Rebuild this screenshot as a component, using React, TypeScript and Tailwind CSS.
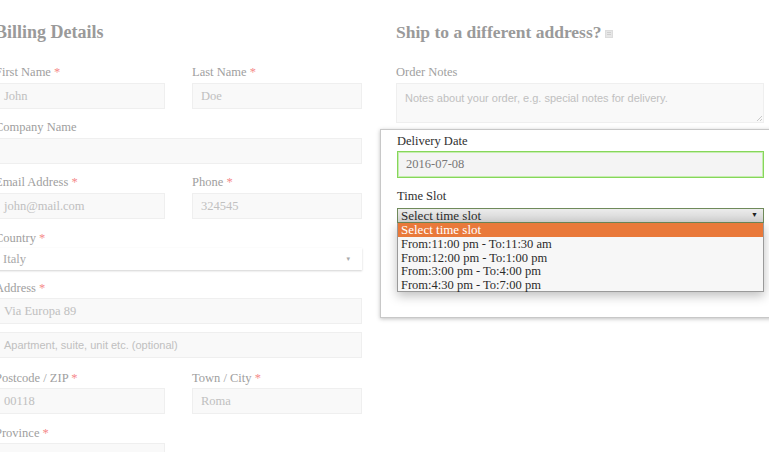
import React from 'react';

const serif = { fontFamily: '"Liberation Serif", "DejaVu Serif", serif' };

const Label: React.FC<{ children: React.ReactNode; req?: boolean; className?: string }> = ({ children, req, className = '' }) => (
  <div className={`h-4 text-[12.5px] leading-4 text-[#a0a0a0] whitespace-nowrap ${className}`}>
    {children}
    {req && <span className="text-[#f58a8a]"> *</span>}
  </div>
);

const Field: React.FC<{ value?: string; sans?: boolean; className?: string }> = ({ value, sans, className = '' }) => (
  <div
    className={`h-[26px] bg-[#f9f9f9] border border-[#efefef] px-2 flex items-center text-[12.5px] text-[#c0c0c0] whitespace-nowrap ${className}`}
    style={sans ? { fontFamily: '"Liberation Sans", Arial, sans-serif', fontSize: 11 } : undefined}
  >
    {value}
  </div>
);

const App: React.FC = () => {
  const slots = [
    'From:11:00 pm - To:11:30 am',
    'From:12:00 pm - To:1:00 pm',
    'From:3:00 pm - To:4:00 pm',
    'From:4:30 pm - To:7:00 pm',
  ];

  return (
    <div className="w-[769px] h-[452px] overflow-hidden bg-white" style={serif}>
      <div className="flex ml-[-5px] gap-[34px]">
        {/* Billing */}
        <div className="w-[367px] shrink-0 pt-5">
          <h3 className="h-6 leading-6 text-[18px] font-bold text-[#9a9a9a] mb-5">Billing Details</h3>

          <div className="flex gap-[27px]">
            <div className="w-[170px]">
              <Label req className="mb-[3px]">First Name</Label>
              <Field value="John" />
            </div>
            <div className="w-[170px]">
              <Label req className="mb-[3px]">Last Name</Label>
              <Field value="Doe" />
            </div>
          </div>

          <Label className="mt-[10px] mb-[3px]">Company Name</Label>
          <Field />

          <div className="flex gap-[27px] mt-[10px]">
            <div className="w-[170px]">
              <Label req className="mb-[3px]">Email Address</Label>
              <Field value="john@mail.com" />
            </div>
            <div className="w-[170px]">
              <Label req className="mb-[3px]">Phone</Label>
              <Field value="324545" />
            </div>
          </div>

          <Label req className="mt-[11px] mb-[2px]">Country</Label>
          <div className="h-[22px] bg-white shadow-[0_1px_2px_rgba(0,0,0,0.18)] px-2 flex items-center justify-between text-[12.5px] text-[#a8a8a8]">
            <span>Italy</span>
            <span className="text-[7px] text-[#aaa] pr-1">▾</span>
          </div>

          <Label req className="mt-[10px] mb-[2px]">Address</Label>
          <Field value="Via Europa 89" />
          <Field value="Apartment, suite, unit etc. (optional)" sans className="mt-2" />

          <div className="flex gap-[27px] mt-3">
            <div className="w-[170px]">
              <Label req className="mb-[2px]">Postcode / ZIP</Label>
              <Field value="00118" />
            </div>
            <div className="w-[170px]">
              <Label req className="mb-[2px]">Town / City</Label>
              <Field value="Roma" />
            </div>
          </div>

          <Label req className="mt-[11px] mb-[2px]">Province</Label>
          <div className="w-[170px]">
            <Field value="Roma" />
          </div>
        </div>

        {/* Shipping */}
        <div className="w-[368px] shrink-0 pt-5">
          <h3 className="h-6 leading-6 text-[17.5px] font-bold text-[#9a9a9a] mb-5 flex items-center">
            Ship to a different address?
            <span className="ml-[3px] mt-[3px] w-[8px] h-[8px] bg-[#e6e6e6] border border-[#dcdcdc] flex flex-col justify-center gap-[1px] px-[1px]">
              <span className="h-px bg-[#cfcfcf]" />
              <span className="h-px bg-[#cfcfcf]" />
            </span>
          </h3>

          <Label className="mb-[3px]">Order Notes</Label>
          <div className="relative h-[40px] bg-[#f9f9f9] border border-[#efefef] px-2 pt-[6px] text-[11px] text-[#c0c0c0] whitespace-nowrap" style={{ fontFamily: '"Liberation Sans", Arial, sans-serif' }}>
            Notes about your order, e.g. special notes for delivery.
            <svg className="absolute right-[1px] bottom-[1px]" width="6" height="6" viewBox="0 0 6 6">
              <path d="M1 6 L6 1 M4 6 L6 4" stroke="#bdbdbd" strokeWidth="0.8" />
            </svg>
          </div>

          {/* Delivery panel */}
          <div className="mt-[6px] -mx-4 w-[400px] px-4 pt-[3px] pb-[94px] bg-white border border-[#c8c8c8] shadow-[0_1px_4px_rgba(0,0,0,0.25)]">
            <div className="h-4 leading-4 text-[12.5px] text-[#2f2f2f] mb-[2px]">Delivery Date</div>
            <div className="w-[367px] h-[27px] bg-[#f4f4f4] border border-[#86d65a] shadow-[inset_0_0_0_1px_#c6eeb0] px-2 flex items-center text-[12.5px] text-[#777]">
              2016-07-08
            </div>

            <div className="h-4 leading-4 text-[12.5px] text-[#2f2f2f] mt-[10px] mb-[4px]">Time Slot</div>
            <div className="relative w-[367px]">
              <div className="h-[15px] bg-gradient-to-b from-[#ececec] to-[#d2d2d2] border border-[#6f8a5a] pl-[3px] pr-[5px] flex items-center justify-between text-[13px] leading-none text-[#2b2b2b]">
                <span>Select time slot</span>
                <span className="text-[7px] text-[#222]">▼</span>
              </div>
              <div className="absolute left-0 top-full w-[367px] bg-[#f7f7f7] border border-[#9a9a9a] border-t-0 shadow-[0_4px_10px_rgba(0,0,0,0.25)] text-[12.5px] text-[#2b2b2b]">
                <div className="h-[14px] leading-[14px] bg-[#e9793a] text-white text-[13px] pl-[3px]">Select time slot</div>
                {slots.map((s) => (
                  <div key={s} className="h-[13.5px] leading-[14px] pl-[3px] whitespace-nowrap">
                    {s}
                  </div>
                ))}
              </div>
            </div>
          </div>
        </div>
      </div>
    </div>
  );
};

export default App;
